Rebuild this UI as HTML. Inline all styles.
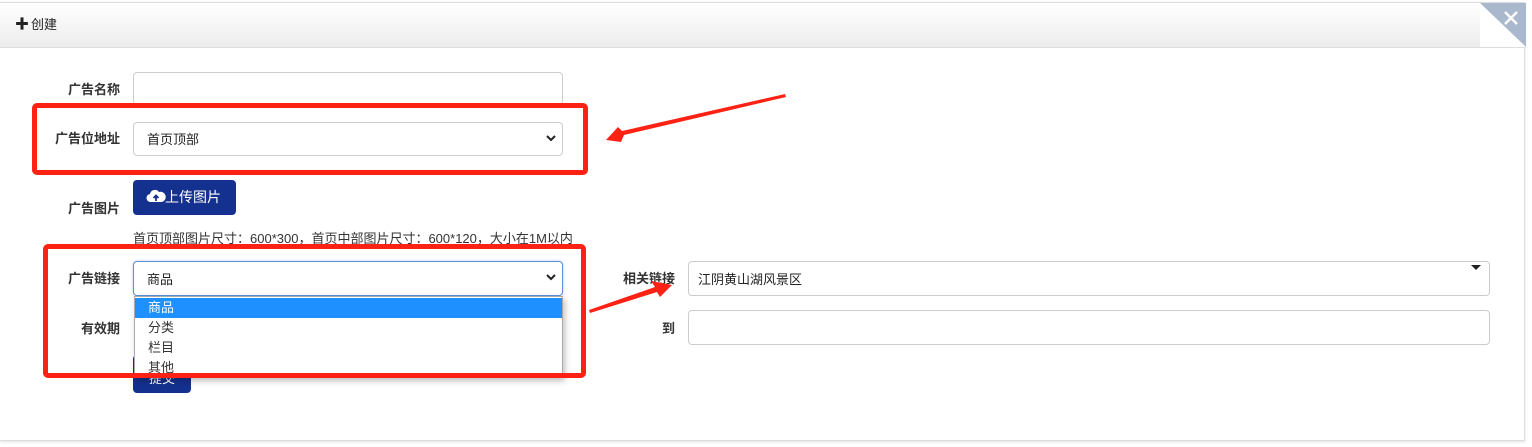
<!DOCTYPE html>
<html><head><meta charset="utf-8"><style>
body{margin:0;width:1532px;height:447px;background:#fff;font-family:"Liberation Sans","Noto Sans CJK SC",sans-serif;position:relative;overflow:hidden;color:#333}
.a{position:absolute}
.panel{left:0;top:2px;width:1524px;height:437px;border:1px solid #ddd;border-left:none;box-shadow:0 1px 3px rgba(0,0,0,.12)}
.hdr{left:0;top:3px;width:1525px;height:44px;background:linear-gradient(#fff,#ececec);border-bottom:1px solid #ddd}
.lbl{font-size:13px;font-weight:bold;color:#333;text-align:right;width:120px}
.inp{border:1px solid #ccc;border-radius:4px;background:#fff;box-sizing:border-box}
.txt{font-size:13px;color:#222}
.opt{left:135px;width:427px;height:20px;font-size:13px;line-height:20px;padding-left:13px;box-sizing:border-box}
</style></head><body>
<div class="a panel"></div>
<div class="a hdr"></div>
<div class="a" style="left:15px;top:14px;font-size:14px;font-weight:bold;color:#222">✚<span style="font-weight:normal;font-size:13px;margin-left:2px">创建</span></div>
<div class="a" style="left:1480px;top:3px;width:45px;height:44px;background:#fff"></div>
<svg class="a" style="left:1480px;top:3px" width="46" height="44"><polygon points="0,0 46,0 46,44" fill="#a9b8cc"/><path d="M25 9 L37 21 M37 9 L25 21" stroke="#fff" stroke-width="2.5"/></svg>

<div class="a lbl" style="left:0;top:79px">广告名称</div>
<div class="a inp" style="left:133px;top:72px;width:430px;height:33px"></div>
<div class="a lbl" style="left:0;top:128px">广告位地址</div>
<div class="a inp" style="left:133px;top:122px;width:430px;height:34px"></div>
<div class="a txt" style="left:147px;top:129px">首页顶部</div>
<svg class="a" style="left:545px;top:134px" width="12" height="10"><path d="M2 2 L6 6 L10 2" stroke="#222" stroke-width="2" fill="none"/></svg>

<div class="a lbl" style="left:0;top:198px">广告图片</div>
<div class="a" style="left:133px;top:180px;width:103px;height:35px;background:#15318f;border-radius:4px"></div>
<svg class="a" style="left:146px;top:188px" width="20" height="16"><path d="M5 14 A4 4 0 0 1 4 6 A5 5 0 0 1 13 4 A4 4 0 0 1 16 14 Z" fill="#fff"/><path d="M10 13 V8 M7.5 10 L10 7.5 L12.5 10" stroke="#15318f" stroke-width="1.8" fill="none"/></svg>
<div class="a" style="left:165px;top:187px;color:#fff;font-size:14px">上传图片</div>
<div class="a" style="left:133px;top:228px;font-size:13px;color:#333;white-space:nowrap">首页顶部图片尺寸：600*300，首页中部图片尺寸：600*120，大小在1M以内</div>

<div class="a lbl" style="left:0;top:268px">广告链接</div>
<div class="a inp" style="left:133px;top:261px;width:430px;height:35px;border-color:#5b8fd8;box-shadow:0 0 3px rgba(80,140,220,.4)"></div>
<div class="a txt" style="left:147px;top:269px">商品</div>
<svg class="a" style="left:545px;top:273px" width="12" height="10"><path d="M2 2 L6 6 L10 2" stroke="#222" stroke-width="2" fill="none"/></svg>
<div class="a lbl" style="left:0;top:318px">有效期</div>
<div class="a" style="left:133px;top:355px;width:58px;height:38px;background:#15318f;border-radius:4px"></div>
<div class="a" style="left:149px;top:368px;color:#fff;font-size:13px">提交</div>
<div class="a" style="left:134px;top:296px;width:429px;height:82px;background:#fff;border:1px solid #aaa;box-sizing:border-box;box-shadow:2px 3px 6px rgba(0,0,0,.25)"></div>
<div class="a opt" style="top:298px;background:#1e90ff;color:#fff">商品</div>
<div class="a opt" style="top:318px">分类</div>
<div class="a opt" style="top:338px">栏目</div>
<div class="a opt" style="top:358px">其他</div>

<div class="a lbl" style="left:555px;top:268px">相关链接</div>
<div class="a inp" style="left:688px;top:261px;width:802px;height:35px"></div>
<div class="a txt" style="left:698px;top:269px">江阴黄山湖风景区</div>
<svg class="a" style="left:1471px;top:265px" width="10" height="6"><polygon points="0,0 10,0 5,5" fill="#222"/></svg>
<div class="a lbl" style="left:555px;top:318px">到</div>
<div class="a inp" style="left:688px;top:310px;width:802px;height:35px"></div>

<div class="a" style="left:32px;top:103px;width:546px;height:62px;border:5px solid #fe2214;border-radius:5px"></div>
<div class="a" style="left:43px;top:244px;width:533px;height:124px;border:5px solid #fe2214;border-radius:5px"></div>
<svg class="a" style="left:0;top:0" width="1532" height="447">
<polygon points="785,94 786,97 624,135 621,142 606,140 618,127 622,131" fill="#fe2214"/>
<polygon points="590,313 589,310 655,287 651,281 672,285 660,297 657,292" fill="#fe2214"/>
</svg>
</body></html>
